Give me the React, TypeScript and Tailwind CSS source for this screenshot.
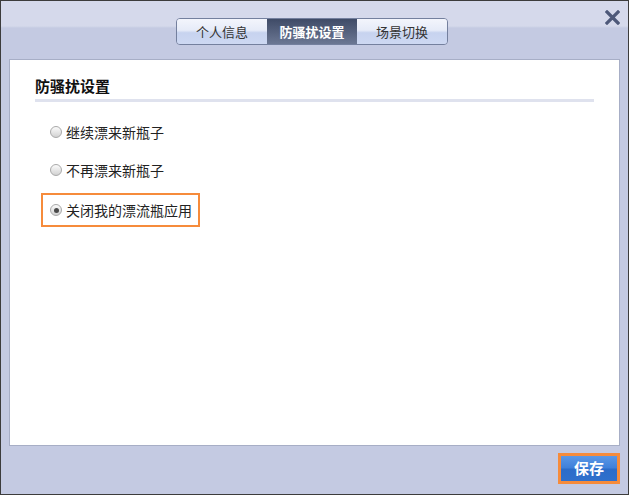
import { useState } from 'react';

const options = ['继续漂来新瓶子', '不再漂来新瓶子', '关闭我的漂流瓶应用'];
const tabs = ['个人信息', '防骚扰设置', '场景切换'];

function Radio({ checked }: { checked: boolean }) {
  return (
    <span className="flex h-[12px] w-[12px] shrink-0 items-center justify-center rounded-full border border-[#a9a9a9] bg-[linear-gradient(#fbfbfb,#d2d2d2)]">
      {checked && <span className="h-[5px] w-[5px] rounded-full bg-[#4a4a4a]" />}
    </span>
  );
}

export default function App() {
  const [active] = useState(1);
  const [choice, setChoice] = useState(2);

  return (
    <div
      className="relative flex h-[495px] w-[629px] flex-col border border-[#3c3c3c] bg-[linear-gradient(#d5d9eb_0px,#d5d9eb_25px,#c4cae2_27px,#c4cae2_100%)]"
      style={{ fontFamily: '"Noto Sans CJK SC", "Noto Sans", sans-serif' }}
    >
      {/* header with tabs */}
      <div className="flex h-[58px] justify-center pr-[5px] pt-[17px]">
        <div className="flex h-[27px] overflow-hidden rounded-[4px] border border-[#74809e]">
          {tabs.map((t, i) => (
            <div
              key={t}
              className={
                i === active
                  ? 'flex w-[90px] items-center justify-center bg-[linear-gradient(#3f4b67,#6b7793)] text-[13px] font-bold text-white'
                  : 'flex w-[90px] items-center justify-center bg-[linear-gradient(#f3f5fc_0%,#e6ebf8_45%,#c7d3ef_55%,#cdd8f2_100%)] text-[13px] text-[#333]'
              }
            >
              {t}
            </div>
          ))}
        </div>
      </div>

      <button className="absolute right-[8px] top-[9px] text-[#4d5879]">
        <svg width="15" height="15" viewBox="0 0 15 15">
          <path d="M2 2 L13 13 M13 2 L2 13" stroke="currentColor" strokeWidth="3.2" strokeLinecap="square" />
        </svg>
      </button>

      {/* content panel */}
      <div className="mx-[8px] flex h-[387px] flex-col border border-[#a7aec6] bg-white px-[25px] pt-[16px]">
        <div className="text-[15px] font-bold leading-[20px] text-[#111]">防骚扰设置</div>
        <div className="mt-[3px] h-[3px] bg-[#dfe2ee]" />

        <div className="mt-[20px] flex flex-col">
          {options.map((o, i) => {
            const boxed = i === 2;
            return (
              <div
                key={o}
                onClick={() => setChoice(i)}
                className={
                  boxed
                    ? 'ml-[6px] mt-[13px] flex h-[34px] w-[159px] cursor-pointer items-center gap-[4px] border-2 border-[#f68b3b] pl-[7px] text-[14px] text-[#222]'
                    : 'flex h-[20px] cursor-pointer items-center gap-[4px] pl-[15px] text-[14px] text-[#222] ' + (i === 1 ? 'mt-[18px]' : '')
                }
              >
                <Radio checked={choice === i} />
                <span>{o}</span>
              </div>
            );
          })}
        </div>
      </div>

      {/* footer */}
      <div className="flex justify-end pr-[8px] pt-[7px]">
        <div className="border-[3px] border-[#f68b3b]">
          <button className="flex h-[25px] w-[56px] items-center justify-center bg-[linear-gradient(#5b97e6_0%,#3f80da_48%,#2c6cc9_52%,#2f70cc_100%)] text-[15px] font-bold text-white">
            保存
          </button>
        </div>
      </div>
    </div>
  );
}
